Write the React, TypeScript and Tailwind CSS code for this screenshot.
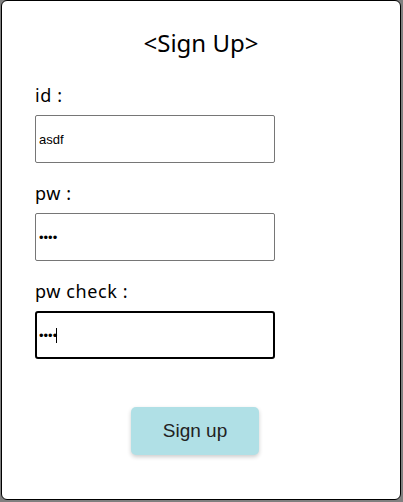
import { useState } from "react";

function Field({
  label,
  type,
  value,
  focused,
}: {
  label: string;
  type: string;
  value: string;
  focused?: boolean;
}) {
  const [text, setText] = useState(value);

  return (
    <div className="flex flex-col">
      <label className="h-[24px] leading-[24px] text-[18px] tracking-[0.6px] text-black [font-family:'Noto_Sans','Open_Sans',sans-serif]">
        {label}
      </label>
      <div className="relative mt-[8px] w-[240px] h-[48px]">
        <input
          type={type}
          value={text}
          onChange={(e) => setText(e.target.value)}
          className={
            focused
              ? "w-full h-full px-[2px] bg-white border-2 border-black rounded-[3px] outline-none caret-transparent text-[13px] text-black [font-family:'Liberation_Sans',Arial,sans-serif]"
              : "w-full h-full px-[3px] bg-white border border-[#767676] rounded-[2px] outline-none text-[13px] text-black [font-family:'Liberation_Sans',Arial,sans-serif]"
          }
        />
        {/* static caret, the reference caught the field mid-typing */}
        {focused && (
          <span className="absolute left-[21px] top-[17px] w-px h-[15px] bg-black" />
        )}
      </div>
    </div>
  );
}

export default function App() {
  return (
    <div className="w-[403px] h-[502px] bg-[#808080]">
      <div className="ml-px w-[400px] h-[500px] bg-white border border-black rounded-[6px] flex flex-col">
        <h1 className="mt-[27px] h-[30px] leading-[30px] text-center text-[24px] text-black [font-family:'Noto_Sans','Open_Sans',sans-serif]">
          &lt;Sign Up&gt;
        </h1>

        <div className="mt-[25px] pl-[33px] flex flex-col gap-[18px]">
          <Field label="id :" type="text" value="asdf" />
          <Field label="pw :" type="password" value="asdf" />
          <Field label="pw check :" type="password" value="asdf" focused />
        </div>

        <div className="mt-[48px] pl-[129px]">
          <button className="w-[128px] h-[48px] rounded-[5px] bg-[#b0e0e6] shadow-[0_2px_4px_rgba(0,0,0,0.2)] text-[19px] text-[#222] [font-family:'Liberation_Sans',Arial,sans-serif]">
            Sign up
          </button>
        </div>
      </div>
    </div>
  );
}
